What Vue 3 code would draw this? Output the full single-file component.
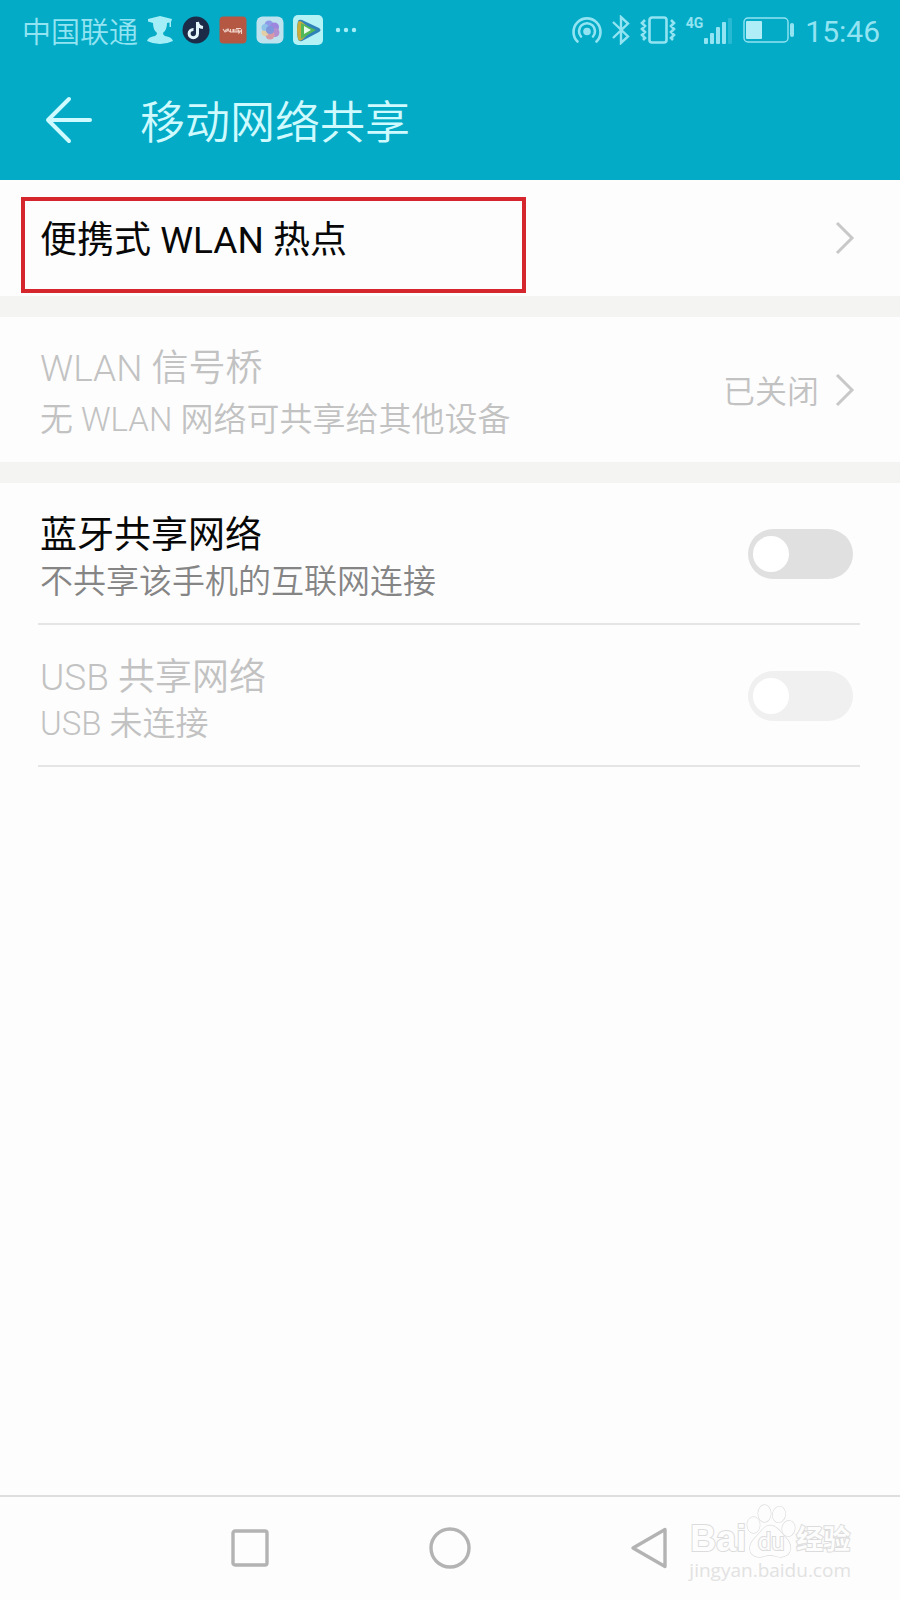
<script setup>
import { ref } from 'vue'

const bluetooth = ref(false)
const usb = ref(false)
</script>

<template>
  <div class="screen">
    <header class="top">
      <div class="status">
        <div class="group left">
          <span class="carrier">中国联通</span>
          <svg width="26" height="30" viewBox="0 0 26 30" aria-hidden="true">
            <path d="M13 1 L25 4 L24 7 V12 H22.500 V7.500 L20 8 Q20 15 16 18 Q16 20 18 21 Q25 22 26 26 Q20 29 13 29 Q6 29 0 26 Q1 22 8 21 Q10 20 10 18 Q6 15 6 8 L1 6.500 V4 Z" fill="#a4eef8" />
          </svg>
          <svg width="28" height="28" viewBox="0 0 28 28" aria-hidden="true">
            <circle cx="14" cy="14" r="13.5" fill="#1b2b48" />
            <path d="M15.5 6 V17.5 A4.2 4.2 0 1 1 11.5 13.4 M15.5 6 Q16 11 21 11.5" fill="none" stroke="#e6f7fb" stroke-width="3" />
          </svg>
          <svg width="28" height="28" viewBox="0 0 28 28" aria-hidden="true">
            <rect x="0.5" y="0.5" width="27" height="27" rx="4" fill="#b45843" />
            <path d="M4 13 l2 3 l1.500 -3 M7.500 16 l1.500 -3 l1.500 3 M11.500 13 v3 h2.500 v-3 M15 13 v3 h2 v-3 M17 16 h2 v-3 M17 12.500 h5 M20 14 v3 l2.500 -3 v4" fill="none" stroke="#f0d4ca" stroke-width="1.1" />
          </svg>
          <svg width="28" height="28" viewBox="0 0 28 28" aria-hidden="true">
            <rect x="0.5" y="0.5" width="27" height="27" rx="6" fill="#bfe3ee" />
            <circle cx="13" cy="9" r="4.5" fill="#8f9be6" />
            <circle cx="18.500" cy="11" r="4.500" fill="#9d86dd" />
            <circle cx="19" cy="16.500" r="4.500" fill="#b48fd0" />
            <circle cx="14" cy="19" r="4.500" fill="#d79aa5" />
            <circle cx="9" cy="16.500" r="3.500" fill="#e3cfa6" />
            <circle cx="9" cy="11.500" r="3.500" fill="#8fc3ea" />
            <circle cx="14" cy="14" r="4" fill="#7f97dc" />
          </svg>
          <svg width="30" height="30" viewBox="0 0 30 30" aria-hidden="true">
            <rect width="30" height="30" rx="5" fill="#b5f2f6" />
            <path d="M5 6 Q6 4 9 5 L26 13 Q29 15 26 17 L9 26 Q6 27 5 24 Q3 15 5 6 Z" fill="#2f83b9" />
            <path d="M5 7 Q6 5 9 7 L19 15 L9 25 Q6 27 5 24 Q3 15 5 7 Z" fill="#c8ac3e" />
            <path d="M8 8 L23 15 L8 24 Z" fill="#52b858" />
            <path d="M11 11 L18 15 L11 19 Z" fill="#e9fbe9" />
          </svg>
          <svg width="28" height="6" viewBox="0 0 28 6" aria-hidden="true" fill="#a4eef8">
            <circle cx="6" cy="3" r="2.2" /><circle cx="14" cy="3" r="2.2" /><circle cx="22" cy="3" r="2.2" />
          </svg>
        </div>
        <div class="group right">
          <svg width="30" height="28" viewBox="0 0 30 28" fill="none" stroke="#93e4f2" stroke-width="2.6" stroke-linecap="round" aria-hidden="true">
            <path d="M5.500 25.500 A13.500 13.500 0 1 1 24.500 25.500" />
            <path d="M9 20.500 A8 8 0 1 1 21 20.500" />
            <circle cx="15" cy="15.500" r="2.500" fill="#93e4f2" />
          </svg>
          <svg width="18" height="30" viewBox="0 0 18 30" fill="none" stroke="#93e4f2" stroke-width="2.4" aria-hidden="true">
            <path d="M1 7 L16 21.500 L9 28 V2 L16 8.500 L1 23" />
          </svg>
          <svg width="36" height="28" viewBox="0 0 36 28" fill="none" stroke="#93e4f2" aria-hidden="true">
            <rect x="9.500" y="1.500" width="17" height="25" rx="2.500" stroke-width="2.600" />
            <path d="M5 4 L2 7 L5 10 L2 13 L5 16 L2 19 L5 22 L3 24 M31 4 L34 7 L31 10 L34 13 L31 16 L34 19 L31 22 L33 24" stroke-width="2.600" />
          </svg>
          <div class="signal">
            <span class="net">4G</span>
            <svg width="30" height="26" viewBox="0 0 30 26" fill="#93e4f2" aria-hidden="true">
              <rect x="1" y="20" width="4" height="6" rx="1" />
              <rect x="7" y="15" width="4" height="11" rx="1" />
              <rect x="13" y="9" width="4" height="17" rx="1" />
              <rect x="19" y="4" width="4" height="22" rx="1" />
              <rect x="25" y="0" width="4" height="26" rx="1" opacity="0.250" />
            </svg>
          </div>
          <svg width="52" height="26" viewBox="0 0 52 26" aria-hidden="true">
            <rect x="1" y="1" width="44" height="24" rx="4" fill="none" stroke="#93e4f2" stroke-width="1.400" />
            <rect x="3" y="4" width="16" height="18" rx="1" fill="#b0eef7" />
            <rect x="47" y="6" width="4" height="14" rx="2" fill="#93e4f2" />
          </svg>
          <time class="clock">15:46</time>
        </div>
      </div>
      <div class="bar">
        <button class="back" type="button" aria-label="返回">
          <svg width="48" height="48" viewBox="0 0 48 48" fill="none" stroke="#cffaff" stroke-width="4" stroke-linecap="round" stroke-linejoin="round" aria-hidden="true">
            <path d="M24 3 L3 24 L24 45 M3 24 H45" />
          </svg>
        </button>
        <h1 class="heading">移动网络共享</h1>
      </div>
    </header>

    <main class="list">
      <button class="row link first" type="button">
        <span class="title">便携式 WLAN 热点</span>
        <svg class="chevron" width="20" height="34" viewBox="0 0 20 34" aria-hidden="true"><path d="M2 2 L17 17 L2 32" /></svg>
        <span class="mark"></span>
      </button>

      <button class="row link bridge muted" type="button" disabled>
        <span class="texts">
          <span class="title">WLAN 信号桥</span>
          <span class="sub">无 WLAN 网络可共享给其他设备</span>
        </span>
        <span class="value">已关闭</span>
        <svg class="chevron" width="20" height="34" viewBox="0 0 20 34" aria-hidden="true"><path d="M2 2 L17 17 L2 32" /></svg>
      </button>

      <label class="row option">
        <span class="texts">
          <span class="title">蓝牙共享网络</span>
          <span class="sub">不共享该手机的互联网连接</span>
        </span>
        <input v-model="bluetooth" class="switch" type="checkbox" role="switch" />
      </label>

      <label class="row option muted">
        <span class="texts">
          <span class="title">USB 共享网络</span>
          <span class="sub">USB 未连接</span>
        </span>
        <input v-model="usb" class="switch" type="checkbox" role="switch" disabled />
      </label>
    </main>

    <nav class="nav">
      <button type="button" aria-label="最近任务">
        <svg width="44" height="44" viewBox="0 0 44 44" aria-hidden="true"><rect x="5" y="5" width="34" height="34" rx="2" /></svg>
      </button>
      <button type="button" aria-label="主屏幕">
        <svg width="44" height="44" viewBox="0 0 44 44" aria-hidden="true"><circle cx="22" cy="22" r="19" /></svg>
      </button>
      <button type="button" aria-label="返回上一页">
        <svg width="44" height="44" viewBox="0 0 44 44" aria-hidden="true"><path d="M5 22 L37 3.500 V40.500 Z" /></svg>
      </button>
      <div class="brand">
        <div class="logo">
          <span class="bai">Bai</span>
          <span class="paw">
            <svg width="50" height="54" viewBox="0 0 50 54" fill="#fdfdfd" stroke="#dcdcdc" stroke-width="1.300" aria-hidden="true">
              <ellipse cx="7.500" cy="21" rx="6.300" ry="8" />
              <ellipse cx="18.500" cy="9.500" rx="6.300" ry="8.500" />
              <ellipse cx="33" cy="10.500" rx="6.300" ry="8" transform="rotate(10 33 10.500)" />
              <ellipse cx="42.500" cy="24.500" rx="6.300" ry="7.800" transform="rotate(10 42.500 24.500)" />
              <path d="M24 21.500 C30 21.500 34 27 38 32 C48 41 46 52 35 53 C30 53 28 51 24 51 C20 51 18 53 13 53 C2 52 1 41 10 33 C15 28 18 21.500 24 21.500 Z" />
            </svg>
            <span class="du">du</span>
          </span>
          <span class="jy">经验</span>
        </div>
        <span class="url">jingyan.baidu.com</span>
      </div>
    </nav>
  </div>
</template>

<style>
body {
  background: #fdfdfd;
}
</style>

<style scoped>
.screen {
  display: flex;
  flex-direction: column;
  min-height: 100vh;
  background: #fdfdfd;
  color: #080808;
  font-family: Roboto, "Noto Sans CJK SC", sans-serif;
  font-weight: 400;
}

button {
  margin: 0;
  padding: 0;
  border: 0;
  background: none;
  color: inherit;
  font: inherit;
  text-align: left;
}

svg {
  display: block;
  flex: none;
}

.top {
  height: 180px;
  background: #03abc6;
}

.status {
  display: flex;
  justify-content: space-between;
  align-items: center;
  height: 60px;
  padding: 0 20px 0 22px;
  color: #93e4f2;
}

.group {
  display: flex;
  align-items: center;
}

.left {
  gap: 9px;
}

.right {
  gap: 10px;
}

.carrier {
  padding-top: 5px;
  font-size: 29px;
  line-height: 40px;
  font-weight: 350;
}

.signal {
  display: flex;
  align-items: flex-end;
  height: 28px;
}

.net {
  align-self: flex-start;
  font-size: 14px;
  line-height: 14px;
  font-weight: 700;
}

.clock {
  padding-top: 4px;
  font-size: 30px;
  line-height: 40px;
  font-weight: 400;
}

.bar {
  display: flex;
  align-items: center;
  gap: 47px;
  height: 120px;
  padding-left: 45px;
}

.heading {
  margin: 0;
  padding-top: 8px;
  color: #cffaff;
  font-size: 45px;
  line-height: 60px;
  font-weight: 350;
}

.list {
  flex: 1;
}

.row {
  position: relative;
  display: flex;
  align-items: center;
  width: 100%;
  box-sizing: border-box;
  padding: 0 45px 0 40px;
}

.link {
  border-bottom: 21px solid #f4f4f3;
}

.row.first {
  justify-content: space-between;
  height: 137px;
}

.first .title {
  padding-top: 5px;
}

.row.bridge {
  height: 166px;
}

.texts {
  display: flex;
  flex: 1;
  flex-direction: column;
  padding-top: 12px;
}

.title {
  font-size: 37px;
  line-height: 44px;
}

.sub {
  color: #858585;
  font-size: 33px;
  line-height: 48px;
  font-weight: 350;
}

.bridge .texts {
  gap: 5px;
}

.muted,
.muted .sub {
  color: #c2c2c2;
}

.muted .title {
  font-weight: 350;
}

.value {
  margin-right: 16px;
  padding-top: 4px;
  font-size: 32px;
  line-height: 48px;
  font-weight: 350;
}

.chevron path {
  fill: none;
  stroke: #c8c8c8;
  stroke-width: 3;
}

.mark {
  position: absolute;
  top: 17px;
  left: 21px;
  box-sizing: border-box;
  width: 505px;
  height: 96px;
  border: 4px solid #d5252d;
}

.option {
  height: 142px;
  padding-right: 47px;
}

.option::after {
  content: "";
  position: absolute;
  right: 40px;
  bottom: 0;
  left: 38px;
  height: 2px;
  background: #e5e5e5;
}

.switch {
  appearance: none;
  box-sizing: border-box;
  width: 105px;
  height: 50px;
  margin: 0;
  padding: 7px 5px;
  border-radius: 25px;
  background: #e0e0e0;
}

.switch::before {
  content: "";
  display: block;
  width: 36px;
  height: 36px;
  border-radius: 50%;
  background: #ffffff;
}

.switch:checked {
  background: #03abc6;
}

.switch:checked::before {
  margin-left: auto;
}

.switch:disabled {
  background: #f0f0f0;
}

.nav {
  position: relative;
  display: flex;
  justify-content: center;
  align-items: center;
  gap: 156px;
  height: 105px;
  padding-bottom: 2px;
  box-sizing: border-box;
  border-top: 2px solid #dedede;
}

.nav button svg {
  fill: none;
  stroke: #b3b3b3;
  stroke-width: 3.4;
  stroke-linejoin: round;
}

.brand {
  position: absolute;
  right: 49px;
  bottom: 18px;
  display: flex;
  flex-direction: column;
  align-items: center;
  color: #fdfdfd;
  paint-order: stroke;
  -webkit-text-stroke: 2px #dcdcdc;
}

.logo {
  display: flex;
  align-items: flex-end;
}

.bai {
  font-family: "Liberation Sans", sans-serif;
  font-size: 36px;
  line-height: 38px;
  font-weight: 700;
}

.paw {
  position: relative;
}

.du {
  position: absolute;
  right: 0;
  bottom: 4px;
  left: 0;
  font-size: 24px;
  line-height: 24px;
  text-align: center;
}

.jy {
  font-size: 27px;
  line-height: 36px;
  font-weight: 700;
}

.url {
  color: #e2e2e2;
  font-family: "Open Sans", sans-serif;
  font-size: 19px;
  line-height: 24px;
  -webkit-text-stroke: 0;
}
</style>
